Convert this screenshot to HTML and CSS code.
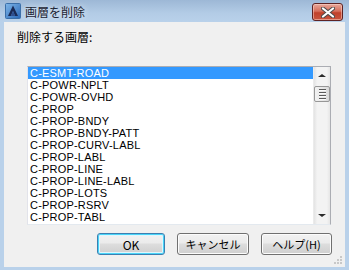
FILE: index.html
```html
<!DOCTYPE html>
<html lang="ja">
<head>
  <meta charset="UTF-8">
  <title>画層を削除</title>
  <link rel="stylesheet" href="styles.css">
</head>
<body>
  <div class="window">
    <div class="titlebar">
      <svg class="app-icon" width="16" height="16" viewBox="0 0 16 16">
        <defs>
          <linearGradient id="ic" x1="0" y1="0" x2="1" y2="1">
            <stop offset="0" stop-color="#7fb6e8"/>
            <stop offset="1" stop-color="#2a68b8"/>
          </linearGradient>
        </defs>
        <rect x="0.5" y="0.5" width="15" height="15" rx="1" fill="url(#ic)" stroke="#3a6ea8"/>
        <polygon points="8,2.5 13,13 10.2,13 8,8 5.8,13 3,13" fill="#1a2a55"/>
        <polygon points="8,8 10.2,13 5.8,13" fill="#2e4f8f"/>
      </svg>
      <span class="title">画層を削除</span>
      <button class="close">
        <svg width="14" height="11" viewBox="0 0 14 11">
          <path d="M2 1.5 L12 9.5 M12 1.5 L2 9.5" stroke="#4a4a4a" stroke-width="4" stroke-linecap="round"/>
          <path d="M2 1.5 L12 9.5 M12 1.5 L2 9.5" stroke="#ffffff" stroke-width="2.2" stroke-linecap="round"/>
        </svg>
      </button>
    </div>

    <div class="client">
      <div class="prompt">削除する画層:</div>

      <div class="listbox">
        <ul class="items">
          <li class="selected">C-ESMT-ROAD</li>
          <li>C-POWR-NPLT</li>
          <li>C-POWR-OVHD</li>
          <li>C-PROP</li>
          <li>C-PROP-BNDY</li>
          <li>C-PROP-BNDY-PATT</li>
          <li>C-PROP-CURV-LABL</li>
          <li>C-PROP-LABL</li>
          <li>C-PROP-LINE</li>
          <li>C-PROP-LINE-LABL</li>
          <li>C-PROP-LOTS</li>
          <li>C-PROP-RSRV</li>
          <li>C-PROP-TABL</li>
        </ul>
        <div class="scrollbar">
          <div class="arrow up"></div>
          <div class="thumb"><span></span><span></span><span></span><span></span></div>
          <div class="track"></div>
          <div class="arrow down"></div>
        </div>
      </div>

      <div class="buttons">
        <button class="btn btn-ok default">OK</button>
        <button class="btn btn-cancel">キャンセル</button>
        <button class="btn btn-help">ヘルプ(H)</button>
      </div>

      <svg class="grip" width="8" height="8" viewBox="0 0 8 8">
        <rect x="6" y="0" width="2" height="2" fill="#c8c8c8"/>
        <rect x="3" y="3" width="2" height="2" fill="#c8c8c8"/>
        <rect x="6" y="3" width="2" height="2" fill="#c8c8c8"/>
        <rect x="0" y="6" width="2" height="2" fill="#c8c8c8"/>
        <rect x="3" y="6" width="2" height="2" fill="#c8c8c8"/>
        <rect x="6" y="6" width="2" height="2" fill="#c8c8c8"/>
      </svg>
    </div>
  </div>
</body>
</html>
```

FILE: styles.css
```css
body { margin: 0; font-family: "Liberation Sans", "Noto Sans CJK JP", sans-serif; background: #b9d1ea; }
.window { width: 349px; height: 270px; box-sizing: border-box; background: #b9d1ea; padding: 0 4px 3px 4px; display: flex; flex-direction: column; }

.titlebar { height: 22px; margin: 0 -4px; padding: 0 6px 0 5px; display: flex; align-items: center; background: linear-gradient(#9db8d6, #b3cce6 60%, #b9d1ea); }
.app-icon { margin-right: 4px; flex: none; }
.title { flex: 1; font-family: "Noto Sans CJK JP", sans-serif; font-size: 12px; color: #1c2433; text-shadow: 0 0 6px rgba(255,255,255,0.8); }
.close { width: 31px; height: 18px; margin-top: 3px; align-self: flex-start; padding: 0; border: 1px solid #5e2323; border-radius: 3px; display: flex; align-items: center; justify-content: center; background: linear-gradient(#e8a99c, #d66e5b 45%, #c0412b 55%, #c9553f); box-shadow: inset 0 0 0 1px rgba(255,220,210,0.5); }

.client { flex: 1; position: relative; background: #f0f0f0; padding: 7px 13px 0 13px; font-family: "Noto Sans CJK JP", sans-serif; }
.prompt { font-size: 12px; line-height: 16px; color: #000; }

.listbox { margin: 21px 0 0 10px; width: 304px; height: 159px; box-sizing: border-box; border: 1px solid #abadb3; border-left-color: #e2e3ea; border-bottom-color: #e3e9ef; background: #fff; display: flex; }
.items { flex: 1; list-style: none; margin: 0; padding: 0; overflow: hidden; font-family: "Liberation Sans", sans-serif; font-size: 11px; }
.items li { height: 12px; line-height: 12px; padding-left: 2px; color: #000; white-space: nowrap; letter-spacing: 0.2px; }
.items li.selected { background: #3399ff; color: #fff; }

.scrollbar { width: 17px; display: flex; flex-direction: column; background: linear-gradient(90deg, #e3e3e3, #f3f3f3 20%, #f3f3f3 80%, #e6e6e6); border-left: 1px solid #ebebeb; box-sizing: border-box; }
.arrow { height: 17px; display: flex; align-items: center; justify-content: center; }
.arrow.up::before { content: ""; border: 4px solid transparent; border-top: 0; border-bottom: 3px solid #2b2b2b; }
.arrow.down::before { content: ""; border: 4px solid transparent; border-bottom: 0; border-top: 3px solid #2b2b2b; }
.thumb { height: 16px; margin: 2px 0 0 0; box-sizing: border-box; border: 1px solid #979797; border-radius: 2px; background: linear-gradient(90deg, #f2f2f2, #e8e8e8 50%, #d8d8d8); display: flex; flex-direction: column; justify-content: center; align-items: center; gap: 1px; }
.thumb span { width: 7px; height: 1px; background: #5a5a5a; border-bottom: 1px solid #fafafa; }
.track { flex: 1; }

.buttons { display: flex; justify-content: flex-end; gap: 12px; margin-top: 8px; }
.btn { height: 22px; padding: 0; border: 1px solid #707070; border-radius: 3px; background: linear-gradient(#f2f2f2, #ebebeb 45%, #dddddd 50%, #cfcfcf); font-family: "Noto Sans CJK JP", sans-serif; font-size: 12px; color: #000; box-shadow: inset 0 0 0 1px #fcfcfc; }
.btn-ok { width: 68px; }
.btn-cancel { width: 72px; font-size: 11px; }
.btn-help { width: 71px; font-size: 11px; }
.btn.default { border-color: #3c7fb1; box-shadow: inset 0 0 0 1px #48d4f8, inset 0 0 0 2px #dff5fd; }

.grip { position: absolute; right: 3px; bottom: 3px; }
```
